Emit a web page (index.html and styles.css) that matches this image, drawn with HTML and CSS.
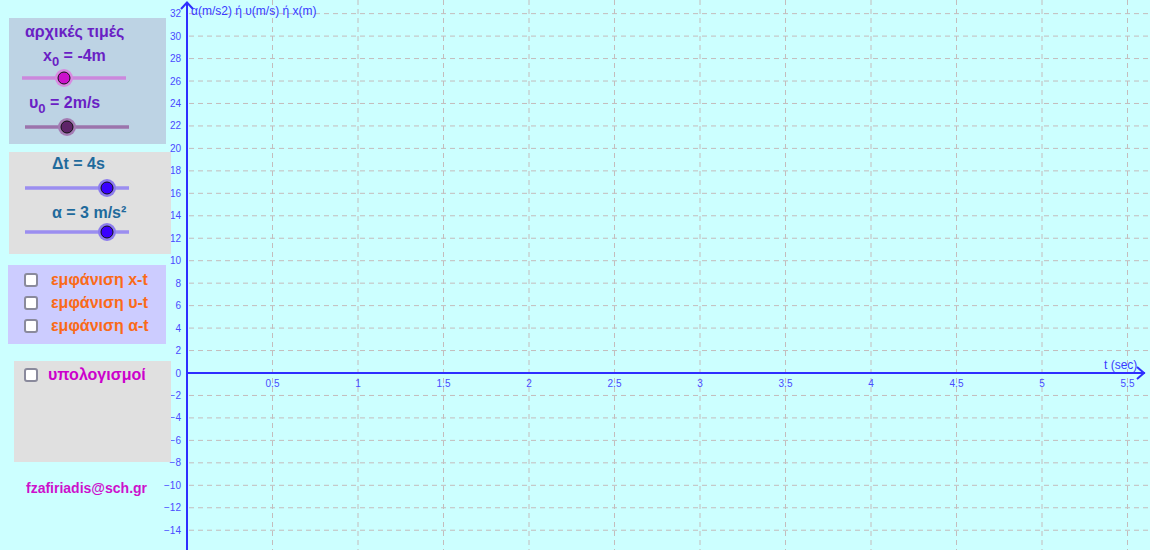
FILE: index.html
```html
<!DOCTYPE html>
<html>
<head>
<meta charset="utf-8">
<link rel="stylesheet" href="styles.css">
</head>
<body>
<div class="app">
  <svg class="graph" width="1150" height="550" viewBox="0 0 1150 550" xmlns="http://www.w3.org/2000/svg">
    <g class="grid" id="grid"></g>
    <g id="labels" class="ticks"></g>
    <line x1="187" y1="2" x2="187" y2="550" class="axis"/>
    <line x1="187" y1="373" x2="1145" y2="373" class="axis"/>
    <polyline points="181,9 187,2.5 193,9" class="arrow"/>
    <polyline points="1137,367 1144,373 1137,379" class="arrow"/>
    <text x="191" y="15" class="axis-title">α(m/s2) ή υ(m/s) ή x(m)</text>
    <text x="1104" y="369" class="axis-title">t (sec)</text>
  </svg>

  <aside class="side">
    <section class="panel p-init">
      <div class="title">αρχικές τιμές</div>
      <div class="val v-x0">x<sub>0</sub> = -4m</div>
      <svg class="slider s1" width="157" height="20">
        <line x1="13" y1="10" x2="117" y2="10" class="track t-pink"/>
        <circle cx="55" cy="10" r="9" class="halo h-pink"/>
        <circle cx="55" cy="10" r="6" class="knob k-pink"/>
      </svg>
      <div class="val v-u0">υ<sub>0</sub> = 2m/s</div>
      <svg class="slider s2" width="157" height="20">
        <line x1="16" y1="10" x2="120" y2="10" class="track t-mauve"/>
        <circle cx="58" cy="10" r="9" class="halo h-mauve"/>
        <circle cx="58" cy="10" r="6" class="knob k-mauve"/>
      </svg>
    </section>

    <section class="panel p-dt">
      <div class="val2 v-dt">Δt = 4s</div>
      <svg class="slider s3" width="162" height="20">
        <line x1="16" y1="10" x2="120" y2="10" class="track t-blue"/>
        <circle cx="98" cy="10" r="9" class="halo h-blue"/>
        <circle cx="98" cy="10" r="6" class="knob k-blue"/>
      </svg>
      <div class="val2 v-a">α = 3 m/s²</div>
      <svg class="slider s4" width="162" height="20">
        <line x1="16" y1="10" x2="120" y2="10" class="track t-blue"/>
        <circle cx="98" cy="10" r="9" class="halo h-blue"/>
        <circle cx="98" cy="10" r="6" class="knob k-blue"/>
      </svg>
    </section>

    <section class="panel p-show">
      <label class="row"><span class="box"></span><span>εμφάνιση x-t</span></label>
      <label class="row"><span class="box"></span><span>εμφάνιση υ-t</span></label>
      <label class="row"><span class="box"></span><span>εμφάνιση α-t</span></label>
    </section>

    <section class="panel p-calc">
      <label class="row calc"><span class="box"></span><span>υπολογισμοί</span></label>
    </section>

    <div class="email">fzafiriadis@sch.gr</div>
  </aside>
</div>
<script src="script.js"></script>
</body>
</html>
```

FILE: script.js
```js
(function () {
  var NS = "http://www.w3.org/2000/svg";
  var grid = document.getElementById("grid");
  var labels = document.getElementById("labels");
  var x0 = 187, y0 = 373, dy = 22.46, dx = 85.5;
  function el(name, attrs, text) {
    var e = document.createElementNS(NS, name);
    for (var k in attrs) e.setAttribute(k, attrs[k]);
    if (text !== undefined) e.textContent = text;
    return e;
  }
  for (var k = -7; k <= 16; k++) {
    var y = y0 - k * dy;
    if (k !== 0) grid.appendChild(el("line", { x1: 189, y1: y, x2: 1148, y2: y }));
    var v = k * 2;
    var t = v < 0 ? "\u2212" + (-v) : String(v);
    labels.appendChild(el("text", { x: 181, y: y + 3.5, "text-anchor": "end" }, t));
  }
  for (var i = 1; i <= 11; i++) {
    var x = x0 + i * dx;
    grid.appendChild(el("line", { x1: x, y1: 0, x2: x, y2: 550 }));
    var val = i / 2;
    labels.appendChild(el("text", { x: x, y: 387, "text-anchor": "middle" }, String(val)));
  }
})();
```

FILE: styles.css
```css
html, body {
  margin: 0;
  padding: 0;
}
body {
  background: #ccffff;
  font-family: "Liberation Sans", Arial, sans-serif;
}
.app {
  position: relative;
  width: 1150px;
  height: 550px;
  overflow: hidden;
  background: #ccffff;
}
.graph {
  position: absolute;
  left: 0;
  top: 0;
}
.grid line {
  stroke: #c4bcbc;
  stroke-width: 1;
  stroke-dasharray: 5 4;
}
.ticks text {
  font-family: "Liberation Sans", Arial, sans-serif;
  font-size: 10px;
  fill: #4a4aff;
}
.axis {
  stroke: #2e2eff;
  stroke-width: 2;
}
.arrow {
  fill: none;
  stroke: #2e2eff;
  stroke-width: 2;
}
.axis-title {
  font-family: "Liberation Sans", Arial, sans-serif;
  font-size: 12px;
  fill: #3a3aff;
}

.side {
  position: relative;
  display: flex;
  flex-direction: column;
  align-items: flex-start;
  padding-top: 18px;
  width: 180px;
}
.panel {
  box-sizing: border-box;
}
.p-init {
  margin-left: 9px;
  width: 157px;
  height: 126px;
  background: #bdd3e4;
  padding-top: 5px;
}
.title {
  height: 18px;
  line-height: 18px;
  font-size: 16px;
  font-weight: bold;
  color: #6a1fc4;
  padding-left: 16px;
}
.val {
  font-size: 16px;
  font-weight: bold;
  line-height: 19px;
  height: 19px;
  color: #6a1fc4;
}
.val sub {
  font-size: 13px;
  line-height: 0;
  vertical-align: -5px;
}
.v-x0 {
  margin-top: 5px;
  padding-left: 34px;
}
.v-u0 {
  margin-top: 5px;
  padding-left: 20px;
}
.slider {
  display: block;
  overflow: visible;
}
.s1 {
  margin-top: 3px;
}
.s2 {
  margin-top: 5px;
}
.track {
  stroke-width: 3.5;
  stroke-linecap: butt;
}
.knob {
  stroke: #111;
  stroke-width: 1;
}
.t-pink { stroke: #cc88dd; }
.h-pink { fill: #d98ae2; }
.k-pink { fill: #cc11cc; }
.t-mauve { stroke: #9c74ac; }
.h-mauve { fill: #a47cb4; }
.k-mauve { fill: #5e2468; }
.t-blue { stroke: #9b8ef0; }
.h-blue { fill: #8c7cee; }
.k-blue { fill: #3a00ff; }

.p-dt {
  margin-top: 8px;
  margin-left: 9px;
  width: 162px;
  height: 102px;
  background: #e0e0e0;
  padding-top: 2px;
}
.val2 {
  font-size: 16px;
  font-weight: bold;
  line-height: 19px;
  height: 19px;
  color: #1f6a9c;
  padding-left: 43px;
}
.s3 {
  margin-top: 5px;
}
.v-a {
  margin-top: 5px;
}
.s4 {
  margin-top: 0px;
}

.p-show {
  margin-top: 11px;
  margin-left: 8px;
  width: 158px;
  height: 79px;
  background: #ccccff;
  padding-top: 3px;
  display: flex;
  flex-direction: column;
}
.row {
  display: flex;
  align-items: center;
  height: 23px;
  gap: 13px;
  padding-left: 16px;
  font-size: 16px;
  font-weight: bold;
  color: #fa6a18;
}
.box {
  box-sizing: border-box;
  width: 14px;
  height: 14px;
  background: #ffffff;
  border: 2px solid #8a8a9c;
  border-radius: 3px;
  flex: none;
}

.p-calc {
  margin-top: 17px;
  margin-left: 14px;
  width: 157px;
  height: 101px;
  background: #e0e0e0;
  padding-top: 3px;
}
.row.calc {
  padding-left: 10px;
  gap: 10px;
  color: #cc00cc;
  height: 22px;
}

.email {
  margin-top: 18px;
  margin-left: 26px;
  font-size: 14px;
  font-weight: bold;
  line-height: 17px;
  color: #cc11cc;
}
```
